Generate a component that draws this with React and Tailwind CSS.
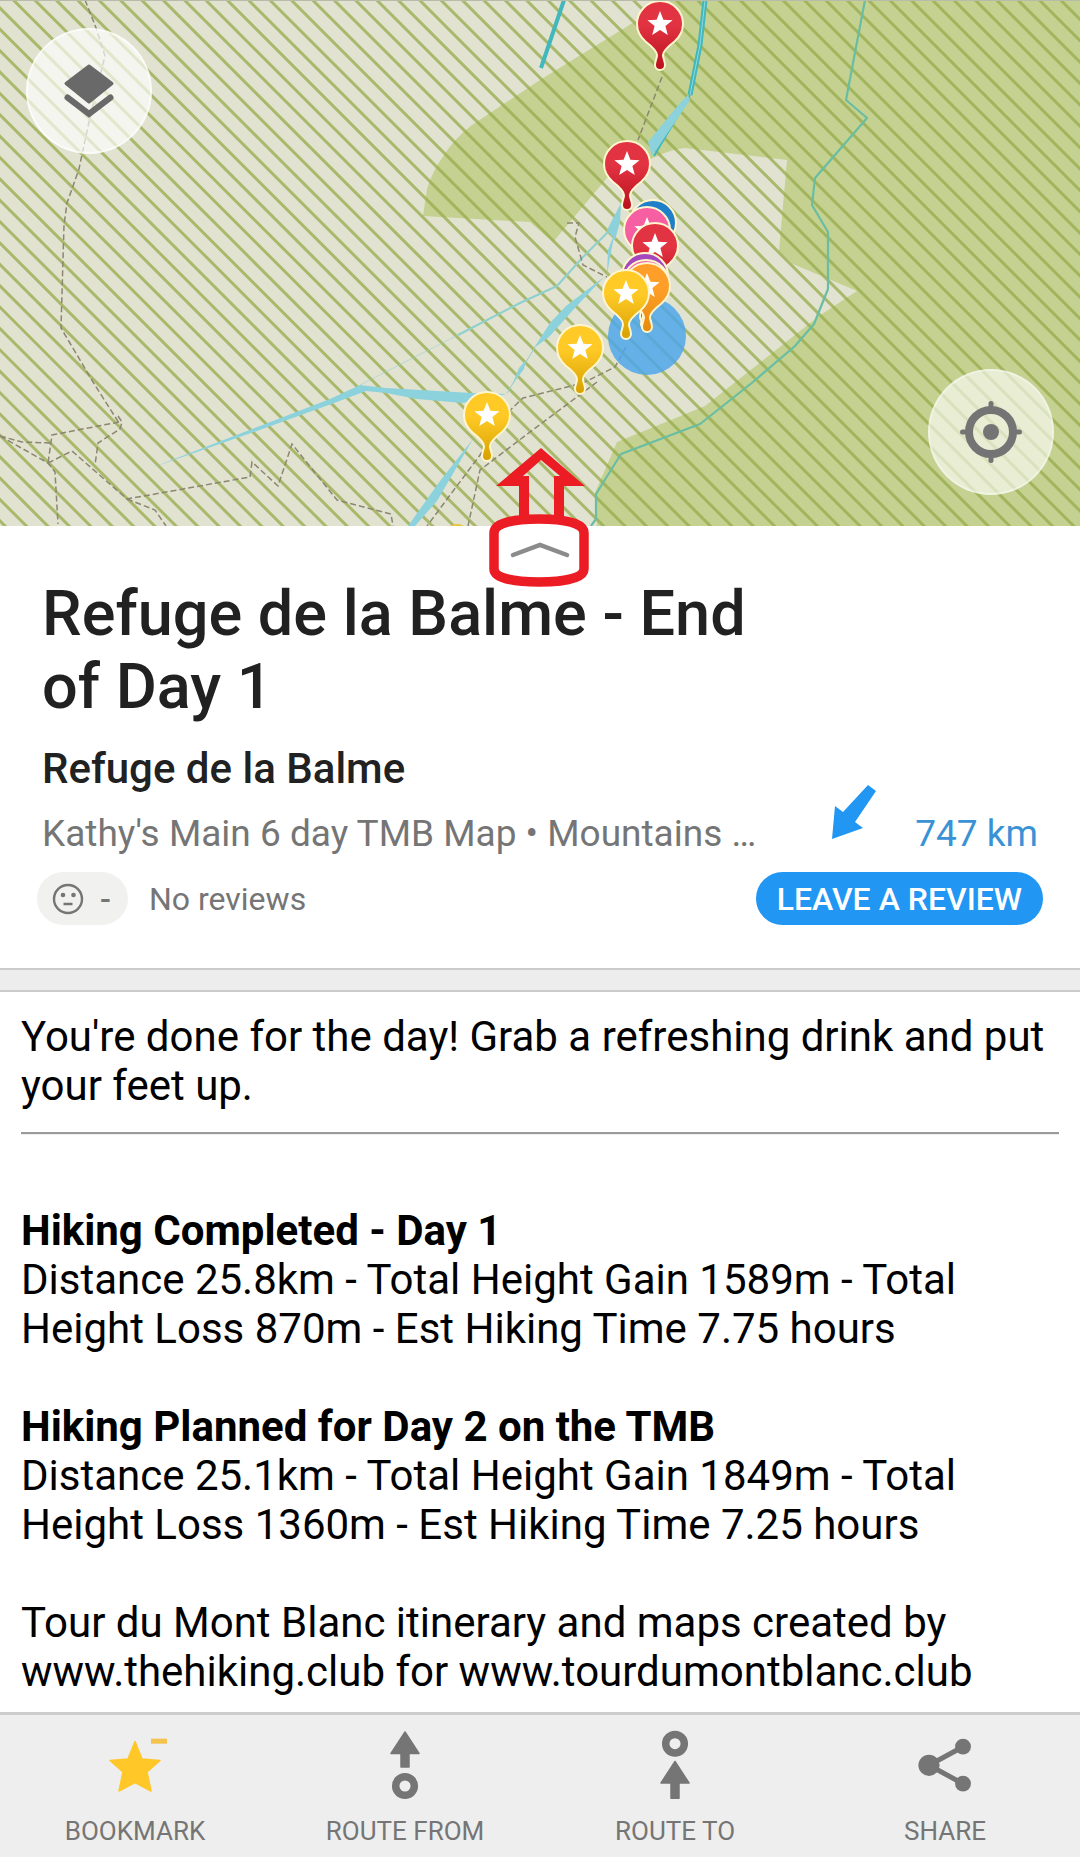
import React from "react";

const STRIPE_STEP = 21.374;
const stripes = Array.from({ length: 78 }, (_, k) => {
  const c = 350 + (k - 68) * STRIPE_STEP;
  return `M-20 ${c - 20}L1100 ${c + 1100}`;
}).join("");

const STAR =
  "M0 -13L3.4 -4.2L12.6 -3.8L5.4 2L7.8 11L0 5.9L-7.8 11L-5.4 2L-12.6 -3.8L-3.4 -4.2Z";
const PIN =
  "M-23 0A23 23 0 1 1 23 0C23 7 20 12.500 14.500 17.500C8 22.500 3.300 27 3 31C2.800 34 5 37 5 41A5 5 0 0 1 -5 41C-5 37 -2.800 34 -3 31C-3.300 27 -8 22.500 -14.500 17.500C-20 12.500 -23 7 -23 0Z";

const pins = [
  { x: 653, y: 223, fill: "url(#blue)" },
  { x: 647, y: 230, fill: "url(#pink)" },
  { x: 660, y: 24, fill: "url(#red)" },
  { x: 627, y: 164, fill: "url(#red)" },
  { x: 655, y: 246, fill: "url(#red)" },
  { x: 645, y: 276, fill: "url(#purple)" },
  { x: 646, y: 283, fill: "url(#pink)" },
  { x: 647, y: 286, fill: "url(#orange)" },
  { x: 626, y: 293, fill: "url(#yellow)" },
  { x: 580, y: 348, fill: "url(#yellow)" },
  { x: 487, y: 415, fill: "url(#yellow)" },
];

const gradients = [
  ["red", "#e23342", "#b90f1c"],
  ["blue", "#1f7fc8", "#1766ad"],
  ["pink", "#f75fa3", "#e0448a"],
  ["purple", "#a547bd", "#7b2596"],
  ["orange", "#ff9f2a", "#e58a0c"],
  ["yellow", "#ffc926", "#d6a000"],
];

const trails = [
  "M85 0L95 25L105 56L102 68L89 122L84 145L79 169L67 203L64 225L61 328L93 382L119 423",
  "M118 416L122 422L120 429L98 443L95 465",
  "M119 422L52 435L48 463",
  "M0 436L22 442L52 443M0 436L48 463L55 472L58 524",
  "M48 463L72 451L127 499L250 477L252 462L278 486L292 444L337 500L391 514L393 526",
  "M127 499L155 510L166 526",
  "M662 77L638 140",
  "M567 223L579 223L575 237L583 265L607 277",
  "M626 347L615 367L583 383L523 398L503 417L480 455L427 526",
  "M597 382L530 432L480 470L468 526",
];

function MapDrawing() {
  return (
    <svg
      className="block h-full w-full"
      viewBox="0 0 1080 526"
      preserveAspectRatio="xMidYMid slice"
      role="img"
      aria-label="Trail map"
    >
      <defs>
        {gradients.map(([id, top, bottom]) => (
          <linearGradient id={id} key={id} x1="0" y1="0" x2="0" y2="1">
            <stop offset="0.35" stopColor={top} />
            <stop offset="1" stopColor={bottom} />
          </linearGradient>
        ))}
      </defs>
      <rect width="1080" height="526" fill="#e2e2d1" />
      <path
        fill="#c5d191"
        d="M423 216L427 189Q432 172 444 155Q455 138 472 125L540 80L631 24L645 16L672 0H1080V526H597L595 493L617 442L705 406L819 316L857 291L793 264L779 251L787 160L685 148Q672 149 655 157L607 178L553 242L530 222Z"
      />
      <path d={stripes} stroke="#98ad4e" strokeOpacity="0.78" strokeWidth="3" fill="none" />
      <g fill="none" stroke="#68bda2" strokeWidth="2.200" strokeLinejoin="round">
        <path d="M865 0L846 100L867 118L815 178L812 205L828 232L828 289L814 324L795 346L753 382L700 424L621 454L596 494L596 519L591 526" />
        <path d="M564 0L541 68" stroke="#42b8bd" strokeWidth="4" />
        <path d="M705 0L700 45L690 95" stroke="#42b8bd" strokeWidth="5" />
        <path d="M705 0L700 45L690 95" stroke="#8fd8de" strokeWidth="1" />
        <path d="M690 95L654 156" stroke="#42b8bd" strokeWidth="2" />
      </g>
      <g fill="#8bd2dd">
        <path d="M688 95L680 103L648 142L652 156L690 100Z" />
        <path d="M621 203L607 230L615 240L620 222Z" />
        <path d="M615 232L608 250L607 275L611 252Z" />
        <path d="M604 277L566 306L550 323L534 348L549 337L574 309Z" />
        <path d="M526 360L519 368L512 385L524 369Z" />
        <path d="M151 468L330 399L360 385L386 388L472 393L507 394L463 403L417 399L386 393L366 391L337 402L251 433Z" />
        <path d="M473 439L440 481L408 526H415L437 501L458 465Z" />
      </g>
      <g fill="none" stroke="#8fd0cf" strokeLinejoin="round">
        <path d="M613 227L583 257L557 286L520 303L458 335" strokeWidth="2" />
        <path d="M458 335L360 385" strokeWidth="1" strokeOpacity="0.5" />
        <path d="M535 347L523 367L507 393" strokeWidth="1" />
      </g>
      <g fill="none" stroke="#8b8770" strokeWidth="1.500" strokeDasharray="6 3">
        {trails.map((d) => (
          <path d={d} key={d} />
        ))}
      </g>
      <circle cx="647" cy="336" r="39" fill="#4aa6ec" fillOpacity="0.83" />
      {pins.map(({ x, y, fill }) => (
        <g key={`${x}-${y}`} transform={`translate(${x} ${y})`}>
          <path d={PIN} fill={fill} stroke="#fff6cf" strokeWidth="2" />
          <path d={STAR} fill="#fff" />
        </g>
      ))}
      <ellipse cx="457" cy="527" rx="7" ry="3" fill="#e9c73c" />
      <rect width="1080" height="1" fill="#b9bba9" />
    </svg>
  );
}

function NavButton({ label, children }) {
  return (
    <button type="button" className="flex flex-1 flex-col items-center pt-3.5">
      <svg className="h-[72px] w-[72px]" viewBox="0 0 72 72" fill="#757575" aria-hidden="true">
        {children}
      </svg>
      <span className="mt-3.5 text-[26px] leading-8 text-[#757575] uppercase">{label}</span>
    </button>
  );
}

export default function App() {
  return (
    <main className="flex min-h-screen flex-col bg-white font-['Roboto',sans-serif] text-[#212121]">
      <section className="relative aspect-[1080/526] w-full">
        <MapDrawing />
        <button
          type="button"
          aria-label="Map layers"
          className="absolute top-7 left-[26px] flex h-[126px] w-[126px] items-center justify-center rounded-full border-2 border-white/60 bg-white/65"
        >
          <svg className="h-[60px] w-[60px]" viewBox="0 0 60 60" aria-hidden="true">
            <path
              d="M30 5L53 22.500L30 41L7 22.500Z"
              fill="#696969"
              stroke="#696969"
              strokeWidth="3"
              strokeLinejoin="round"
            />
            <path
              d="M8.500 36.500L30 53L51.500 36.500"
              fill="none"
              stroke="#696969"
              strokeWidth="6"
              strokeLinecap="round"
            />
          </svg>
        </button>
        <button
          type="button"
          aria-label="My location"
          className="absolute right-[26px] bottom-[31px] flex h-[126px] w-[126px] items-center justify-center rounded-full border-2 border-white/40 bg-white/60"
        >
          <svg className="h-16 w-16" viewBox="-32 -32 64 64" aria-hidden="true">
            <circle r="22" fill="none" stroke="#747474" strokeWidth="8" />
            <circle r="8" fill="#747474" />
            <path
              d="M0 -28.500V-22M0 28.500V22M-28.500 0H-22M28.500 0H22"
              stroke="#747474"
              strokeWidth="5"
              strokeLinecap="round"
            />
          </svg>
        </button>
        <button
          type="button"
          aria-label="Expand details"
          className="absolute -bottom-[62px] left-1/2 z-10 -translate-x-1/2"
        >
          <svg className="h-[142px] w-[104px]" viewBox="488 446 104 142" aria-hidden="true">
            <path
              d="M494 533C494 523 514 519 539 519S584 523 584 533V569C584 578 564 582 539 582S494 578 494 569Z"
              fill="#fff"
            />
            <path
              fill="#ec1c24"
              fillRule="evenodd"
              d="M541 448L585 486H564V518H519V486H496ZM541 460L523 476H529V518H554V476H560Z"
            />
            <path
              d="M494 533C494 523 514 519 539 519S584 523 584 533V569C584 578 564 582 539 582S494 578 494 569Z"
              fill="none"
              stroke="#ec1c24"
              strokeWidth="9.500"
            />
            <path
              d="M513 555L540 545L567 555"
              fill="none"
              stroke="#8b8b8b"
              strokeWidth="4.500"
              strokeLinecap="round"
            />
          </svg>
        </button>
      </section>

      <section className="px-[42px] pt-[51px] pb-[43px]">
        <h1 className="max-w-[760px] text-[63px] leading-[73px] font-medium">
          Refuge de la Balme - End of Day 1
        </h1>
        <h2 className="mt-[21px] text-[42px] leading-[49px] font-medium">Refuge de la Balme</h2>
        <div className="mt-[18px] flex items-center text-[37px] leading-[45px]">
          <p className="flex-1 whitespace-nowrap text-[#757575]">
            Kathy's Main 6 day TMB Map • Mountains …
          </p>
          <svg className="mr-[38px] -mt-[43px] h-[56px] w-[46px]" viewBox="832 784 46 56" aria-hidden="true">
            <path
              d="M869 785L877 791L856 822L864 828L833 839L836 806L844 812Z"
              fill="#2196f3"
            />
          </svg>
          <p className="text-[#3a92d6]">747 km</p>
        </div>
        <div className="-mx-[5px] mt-4 flex h-[53px] items-center text-[32px]">
          <span className="flex h-full w-[91px] items-center rounded-full bg-[#f1f1ef] pl-[15px] text-[#757575]">
            <svg className="h-8 w-8" viewBox="-16 -16 32 32" aria-hidden="true">
              <circle r="14" fill="none" stroke="#757575" strokeWidth="2.400" />
              <circle cx="-5" cy="-4" r="2.300" fill="#757575" />
              <circle cx="5.500" cy="-4" r="2.300" fill="#757575" />
              <path d="M-4.500 5H4.500" stroke="#757575" strokeWidth="2.500" />
            </svg>
            <span className="ml-4 font-medium">-</span>
          </span>
          <p className="ml-[21px] flex-1 text-[#757575]">No reviews</p>
          <button
            type="button"
            className="h-full rounded-full bg-[#2196f3] px-[21px] font-medium text-white"
          >
            LEAVE A REVIEW
          </button>
        </div>
      </section>

      <div className="h-6 shrink-0 border-y-2 border-[#cbcbcb] bg-[#ededed]" />

      <article className="flex-1 px-[21px] pt-5 pb-3 text-[42px] leading-[49px] text-black">
        <p>You're done for the day! Grab a refreshing drink and put your feet up.</p>
        <hr className="mt-[22px] border-t-2 border-b border-t-[#9a9a9a] border-b-[#eeeeee]" />
        <h3 className="mt-[71px] font-bold">Hiking Completed - Day 1</h3>
        <p>Distance 25.8km - Total Height Gain 1589m - Total Height Loss 870m - Est Hiking Time 7.75 hours</p>
        <h3 className="mt-[49px] font-bold">Hiking Planned for Day 2 on the TMB</h3>
        <p>Distance 25.1km - Total Height Gain 1849m - Total Height Loss 1360m - Est Hiking Time 7.25 hours</p>
        <p className="mt-[49px]">
          Tour du Mont Blanc itinerary and maps created by www.thehiking.club for
          www.tourdumontblanc.club
        </p>
      </article>

      <nav className="flex h-[145px] shrink-0 border-t-[3px] border-[#cccccc] bg-[#eeeeee]">
        <NavButton label="Bookmark">
          <path
            d="M36 12.500L43 30L61 31.500L48 43L52 62L36 53.500L20 62L24 43L11 31.500L29 30Z"
            fill="#ffc727"
            stroke="#ffc727"
            strokeWidth="1.500"
            strokeLinejoin="round"
          />
          <path d="M52 9.700H68V14.700H52Z" fill="#f3c34d" />
        </NavButton>
        <NavButton label="Route from">
          <path
            d="M36 3L50 24.500H40V38H32V24.500H22Z"
            stroke="#757575"
            strokeWidth="1.500"
            strokeLinejoin="round"
          />
          <circle cx="36" cy="57" r="9.300" fill="none" stroke="#757575" strokeWidth="7.500" />
        </NavButton>
        <NavButton label="Route to">
          <circle cx="36" cy="14.700" r="9.300" fill="none" stroke="#757575" strokeWidth="7.500" />
          <path
            d="M36 32.500L50 54H40V69.300H32V54H22Z"
            stroke="#757575"
            strokeWidth="1.500"
            strokeLinejoin="round"
          />
        </NavButton>
        <NavButton label="Share">
          <path d="M54 17.700L20 36.300L54 54.700" fill="none" stroke="#757575" strokeWidth="5" />
          <circle cx="20" cy="36.300" r="10.600" />
          <circle cx="54" cy="17.700" r="7.900" />
          <circle cx="54" cy="54.700" r="7.900" />
        </NavButton>
      </nav>
    </main>
  );
}
